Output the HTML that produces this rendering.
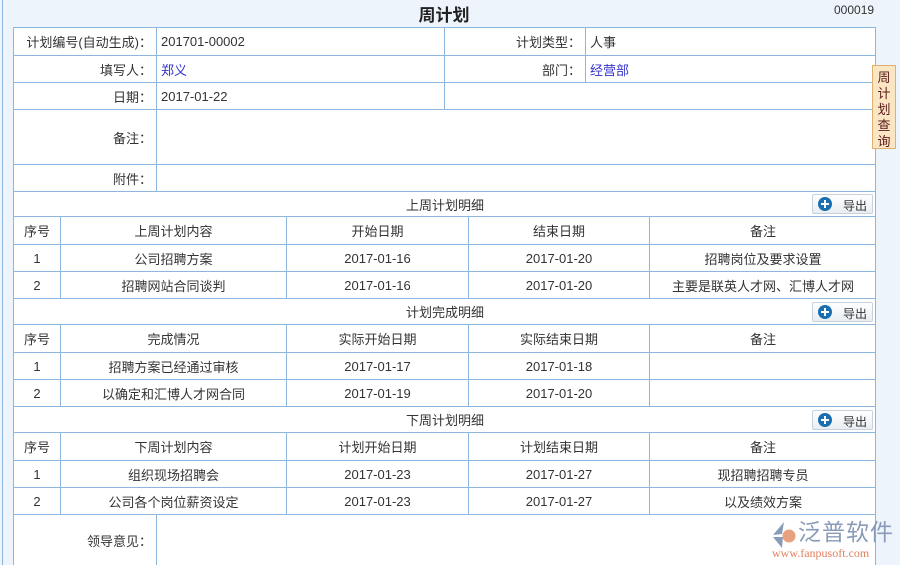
<!DOCTYPE html><html><head><meta charset="utf-8"><style>
html,body{margin:0;width:900px;height:565px;overflow:hidden}
body{background:#eef4fc;font-family:"Liberation Sans","Noto Sans CJK SC",sans-serif;font-size:13px;color:#333;position:relative}
.c{position:absolute;border-left:1px solid #8db6df;border-top:1px solid #8db6df;box-sizing:border-box;display:flex;align-items:center;background:#fff;white-space:nowrap}
.r{justify-content:flex-end;padding-right:4px}.l{padding-left:4px}.m{justify-content:center}
.blue{color:#3333cc}
.btn{position:absolute;left:812px;width:61px;height:20px;border:1px solid #c8d2dc;border-radius:2px;background:linear-gradient(#fff,#e9eef3);box-sizing:border-box;font-size:12px;color:#333}
.btn i{position:absolute;left:5px;top:2px;width:14px;height:14px;border-radius:50%;background:#1a6fb0}
.btn i:before{content:"";position:absolute;left:3px;top:6px;width:8px;height:2px;background:#fff}
.btn i:after{content:"";position:absolute;left:6px;top:3px;width:2px;height:8px;background:#fff}
.btn span{position:absolute;left:30px;top:2px}
</style></head><body>
<div style="position:absolute;left:2px;top:0;width:1px;height:565px;background:#8db6df"></div>
<div style="position:absolute;left:0;width:888px;top:1px;text-align:center;font-size:17px;font-weight:bold;color:#222">周计划</div>
<div style="position:absolute;left:834px;top:3px;font-size:12px">000019</div>

<div class="c r" style="left:13px;top:27px;width:143px;height:28px">计划编号(自动生成)：</div>
<div class="c l" style="left:156px;top:27px;width:288px;height:28px">201701-00002</div>
<div class="c r" style="left:444px;top:27px;width:141px;height:28px">计划类型：</div>
<div class="c l" style="left:585px;top:27px;width:291px;height:28px">人事</div>
<div class="c r" style="left:13px;top:55px;width:143px;height:27px">填写人：</div>
<div class="c l blue" style="left:156px;top:55px;width:288px;height:27px">郑义</div>
<div class="c r" style="left:444px;top:55px;width:141px;height:27px">部门：</div>
<div class="c l blue" style="left:585px;top:55px;width:291px;height:27px">经营部</div>
<div class="c r" style="left:13px;top:82px;width:143px;height:27px">日期：</div>
<div class="c l" style="left:156px;top:82px;width:288px;height:27px">2017-01-22</div>
<div class="c" style="left:444px;top:82px;width:432px;height:27px"></div>
<div class="c r" style="left:13px;top:109px;width:143px;height:55px">备注：</div>
<div class="c" style="left:156px;top:109px;width:720px;height:55px"></div>
<div class="c r" style="left:13px;top:164px;width:143px;height:27px">附件：</div>
<div class="c" style="left:156px;top:164px;width:720px;height:27px"></div>

<div class="c m" style="left:13px;top:191px;width:863px;height:25px">上周计划明细</div>
<div class="btn" style="top:194px"><i></i><span>导出</span></div>
<div class="c m" style="left:13px;top:216px;width:47px;height:28px">序号</div><div class="c m" style="left:60px;top:216px;width:226px;height:28px">上周计划内容</div><div class="c m" style="left:286px;top:216px;width:182px;height:28px">开始日期</div><div class="c m" style="left:468px;top:216px;width:181px;height:28px">结束日期</div><div class="c m" style="left:649px;top:216px;width:227px;height:28px">备注</div>
<div class="c m" style="left:13px;top:244px;width:47px;height:27px">1</div><div class="c m" style="left:60px;top:244px;width:226px;height:27px">公司招聘方案</div><div class="c m" style="left:286px;top:244px;width:182px;height:27px">2017-01-16</div><div class="c m" style="left:468px;top:244px;width:181px;height:27px">2017-01-20</div><div class="c m" style="left:649px;top:244px;width:227px;height:27px">招聘岗位及要求设置</div>
<div class="c m" style="left:13px;top:271px;width:47px;height:27px">2</div><div class="c m" style="left:60px;top:271px;width:226px;height:27px">招聘网站合同谈判</div><div class="c m" style="left:286px;top:271px;width:182px;height:27px">2017-01-16</div><div class="c m" style="left:468px;top:271px;width:181px;height:27px">2017-01-20</div><div class="c m" style="left:649px;top:271px;width:227px;height:27px">主要是联英人才网、汇博人才网</div>

<div class="c m" style="left:13px;top:298px;width:863px;height:26px">计划完成明细</div>
<div class="btn" style="top:302px"><i></i><span>导出</span></div>
<div class="c m" style="left:13px;top:324px;width:47px;height:28px">序号</div><div class="c m" style="left:60px;top:324px;width:226px;height:28px">完成情况</div><div class="c m" style="left:286px;top:324px;width:182px;height:28px">实际开始日期</div><div class="c m" style="left:468px;top:324px;width:181px;height:28px">实际结束日期</div><div class="c m" style="left:649px;top:324px;width:227px;height:28px">备注</div>
<div class="c m" style="left:13px;top:352px;width:47px;height:27px">1</div><div class="c m" style="left:60px;top:352px;width:226px;height:27px">招聘方案已经通过审核</div><div class="c m" style="left:286px;top:352px;width:182px;height:27px">2017-01-17</div><div class="c m" style="left:468px;top:352px;width:181px;height:27px">2017-01-18</div><div class="c m" style="left:649px;top:352px;width:227px;height:27px"></div>
<div class="c m" style="left:13px;top:379px;width:47px;height:27px">2</div><div class="c m" style="left:60px;top:379px;width:226px;height:27px">以确定和汇博人才网合同</div><div class="c m" style="left:286px;top:379px;width:182px;height:27px">2017-01-19</div><div class="c m" style="left:468px;top:379px;width:181px;height:27px">2017-01-20</div><div class="c m" style="left:649px;top:379px;width:227px;height:27px"></div>

<div class="c m" style="left:13px;top:406px;width:863px;height:26px">下周计划明细</div>
<div class="btn" style="top:410px"><i></i><span>导出</span></div>
<div class="c m" style="left:13px;top:432px;width:47px;height:28px">序号</div><div class="c m" style="left:60px;top:432px;width:226px;height:28px">下周计划内容</div><div class="c m" style="left:286px;top:432px;width:182px;height:28px">计划开始日期</div><div class="c m" style="left:468px;top:432px;width:181px;height:28px">计划结束日期</div><div class="c m" style="left:649px;top:432px;width:227px;height:28px">备注</div>
<div class="c m" style="left:13px;top:460px;width:47px;height:27px">1</div><div class="c m" style="left:60px;top:460px;width:226px;height:27px">组织现场招聘会</div><div class="c m" style="left:286px;top:460px;width:182px;height:27px">2017-01-23</div><div class="c m" style="left:468px;top:460px;width:181px;height:27px">2017-01-27</div><div class="c m" style="left:649px;top:460px;width:227px;height:27px">现招聘招聘专员</div>
<div class="c m" style="left:13px;top:487px;width:47px;height:27px">2</div><div class="c m" style="left:60px;top:487px;width:226px;height:27px">公司各个岗位薪资设定</div><div class="c m" style="left:286px;top:487px;width:182px;height:27px">2017-01-23</div><div class="c m" style="left:468px;top:487px;width:181px;height:27px">2017-01-27</div><div class="c m" style="left:649px;top:487px;width:227px;height:27px">以及绩效方案</div>
<div class="c r" style="left:13px;top:514px;width:143px;height:51px">领导意见：</div>
<div class="c" style="left:156px;top:514px;width:720px;height:51px"></div>
<div style="position:absolute;left:875px;top:27px;width:1px;height:538px;background:#8db6df"></div>

<div style="position:absolute;left:872px;top:65px;width:24px;height:84px;background:#fbe6c4;border:1px solid #e0b070;box-sizing:border-box;font-size:13px;line-height:16px;text-align:center;padding-top:4px;color:#5a1a1a">周<br>计<br>划<br>查<br>询</div>

<svg style="position:absolute;left:770px;top:521px" width="28" height="28" viewBox="0 0 28 28"><path d="M14 1 L3 14 L12 13 Z" fill="#8a9bb8"/><path d="M3 16 L12 27 L13 16 Z" fill="#8a9bb8"/><circle cx="19" cy="15" r="6.5" fill="#e8a080"/></svg>
<div style="position:absolute;left:798px;top:518px;font-size:23px;line-height:28px;color:#8a9bb8;white-space:nowrap;letter-spacing:1px">泛普软件</div>
<div style="position:absolute;left:772px;top:546px;font-family:'Liberation Serif',serif;font-size:12px;color:#e08060;white-space:nowrap">www.fanpusoft.com</div>
</body></html>
